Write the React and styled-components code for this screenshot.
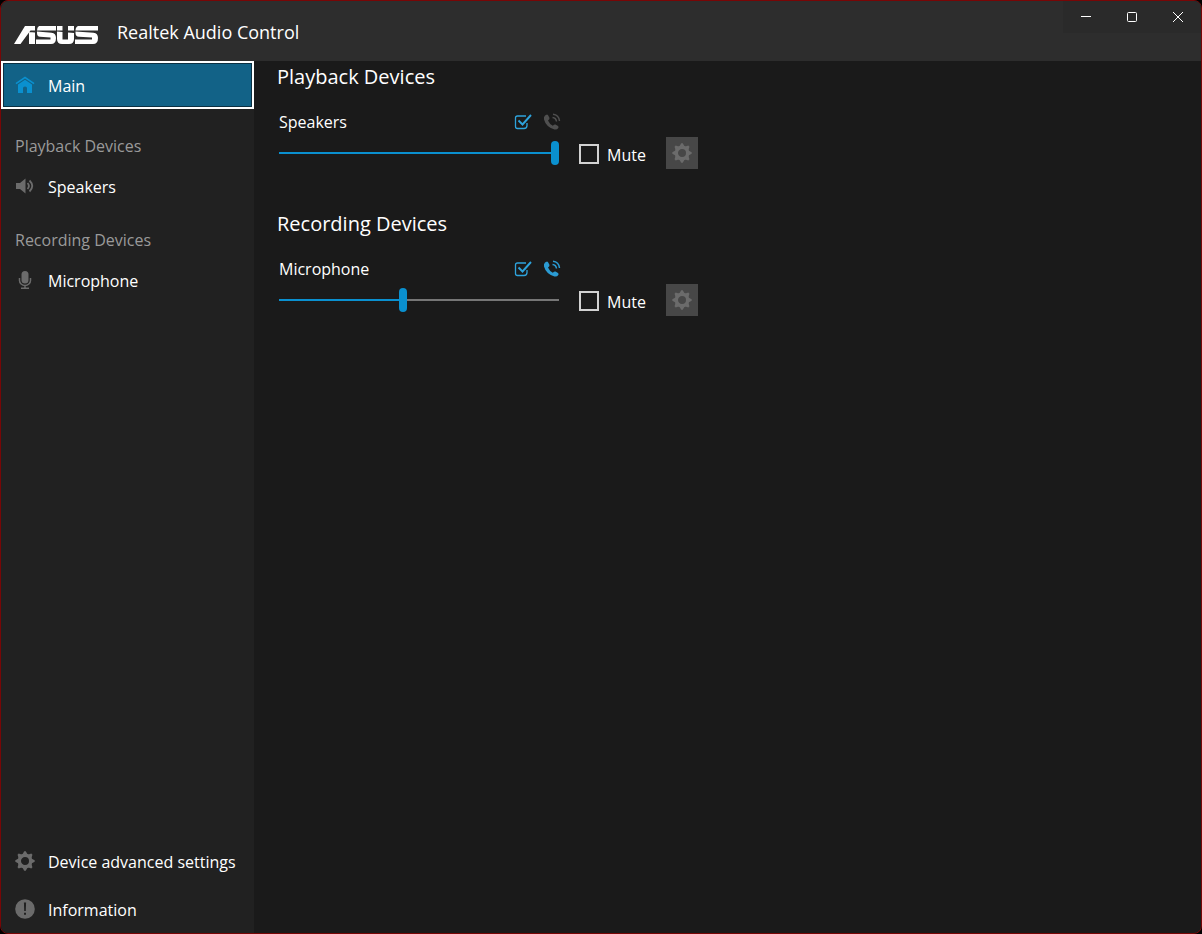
import React, { useState } from 'react';
import styled, { createGlobalStyle } from 'styled-components';

const Blue = '#0a90cf';
const Gray = '#6b6b6b';

const GlobalStyle = createGlobalStyle`
  * {
    box-sizing: border-box;
  }
  body {
    margin: 0;
    background-color: black;
    color: white;
    font-family: 'Open Sans', 'Noto Sans', sans-serif;
    font-size: 16px;
    line-height: 24px;
  }
  button, input {
    font: inherit;
    color: inherit;
  }
`;

const Window = styled.div`
  min-height: 100vh;
  display: flex;
  flex-direction: column;
  border: 1px solid #780606;
  border-radius: 8px;
  overflow: hidden;
  background-color: #1a1a1a;
`;

const Header = styled.header`
  height: 60px;
  display: flex;
  justify-content: space-between;
  background-color: #2d2d2d;
`;

const Brand = styled.div`
  display: flex;
  align-items: center;
  gap: 18px;
  padding: 2px 0 0 12px;
`;

const AppName = styled.h1`
  margin: 0;
  font-size: 18px;
  font-weight: 400;
`;

const WindowControls = styled.div`
  height: 32px;
  display: flex;
  background-color: #2a2a2a;
`;

const WindowButton = styled.button`
  width: 46px;
  padding: 0;
  border: 0;
  display: flex;
  align-items: center;
  justify-content: center;
  background: none;
  &:hover {
    background-color: #3a3a3a;
  }
`;

const Body = styled.div`
  flex: 1;
  display: flex;
`;

const Sidebar = styled.nav`
  width: 253px;
  flex-shrink: 0;
  display: flex;
  flex-direction: column;
  justify-content: space-between;
  background-color: #212121;
`;

const NavGroup = styled.div`
  display: flex;
  flex-direction: column;
`;

const NavTitle = styled.h2`
  margin: 0;
  padding: 18px 14px 4px;
  font-size: 16px;
  font-weight: 400;
  color: #9a9a9a;
`;

const NavButton = styled.button`
  height: 48px;
  margin-bottom: ${({ $active }) => ($active ? '7px' : '0')};
  padding: 0 ${({ $active }) => ($active ? '12px' : '14px')};
  border: ${({ $active }) => ($active ? '2px solid white' : '0')};
  display: flex;
  align-items: center;
  gap: 13px;
  text-align: left;
  background-color: ${({ $active }) => ($active ? '#126287' : 'transparent')};
  box-shadow: ${({ $active }) => ($active ? 'inset 0 0 0 1px #0b3042' : 'none')};
  cursor: pointer;
`;

const LabelText = styled.span`
  padding-top: 2px;
`;

const Content = styled.main`
  flex: 1;
  padding: 3px 23px;
`;

const Section = styled.section`
  height: 147px;
`;

const SectionTitle = styled.h2`
  margin: 0 0 20px;
  font-size: 20px;
  font-weight: 400;
  line-height: 26px;
`;

const Device = styled.div`
  display: grid;
  grid-template-columns: 284px auto auto;
  row-gap: 3px;
  justify-content: start;
  align-items: center;
  padding-left: 2px;
`;

const DeviceHeader = styled.div`
  grid-column: 1 / -1;
  width: 284px;
  display: flex;
  justify-content: space-between;
`;

const DeviceIcons = styled.div`
  display: flex;
  align-items: center;
  gap: 9px;
  padding-right: 1px;
`;

const Slider = styled.input`
  appearance: none;
  width: 280px;
  height: 24px;
  margin: 0;
  background: linear-gradient(
      to right,
      ${Blue} ${({ value }) => value}%,
      #767676 ${({ value }) => value}%
    )
    center / 100% 2px no-repeat;
  &::-webkit-slider-thumb {
    appearance: none;
    width: 8px;
    height: 24px;
    border-radius: 4px;
    background-color: ${Blue};
  }
`;

const MuteLabel = styled.label`
  display: flex;
  align-items: center;
  gap: 8px;
  margin-left: 16px;
  padding-top: 2px;
`;

const MuteBox = styled.input`
  appearance: none;
  width: 20px;
  height: 20px;
  margin: 0;
  border: 2px solid #d2d2d2;
  &:checked {
    background-color: ${Blue};
  }
`;

const SettingsButton = styled.button`
  width: 32px;
  height: 32px;
  margin-left: 20px;
  padding: 0;
  border: 0;
  display: flex;
  align-items: center;
  justify-content: center;
  background-color: #474747;
`;

const AsusLogo = () => (
  <svg width="86" height="26" viewBox="0 -6 86 26" fill="white" role="img" aria-label="ASUS">
    <path d="M1 19 12 1h10v4.500h-4.500L7.500 19zM16 7l6 .6V19h-6z" />
    <path d="M26 1h17v4.500H24Q24 2 26 1zM24 6.500l14.500 1.300q4.500.6 4.500 5.200 0 6-5 6H23v-4.500h14.500v-2L27 11.800q-3-.4-3-3.800z" />
    <path d="M44 1h5.500v4.500H44zM44 6.500l5.500.5v7.500H55V7.400l6 .5V14q0 5-5 5h-7q-5 0-5-5zM55 1h6v4.500h-6z" />
    <path d="M65 1h20v4.500H62.500Q62.500 2 65 1zM62.500 6.500l18 1.300q4.500.6 4.500 5.200 0 6-5 6H62v-4.500h17v-2l-13-.7q-3.500-.4-3.500-3.800z" />
  </svg>
);

const Home = () => (
  <svg width="20" height="20" viewBox="0 0 20 20" fill={Blue}>
    <path d="M10 1.500.5 8l.9 1.200L10 3.600l8.600 5.600.9-1.200z" />
    <path d="M10 4.800 3 9.400V18h5v-5q0-1.500 2-1.500t2 1.500v5h5V9.400z" />
  </svg>
);

const Volume = () => (
  <svg width="20" height="20" viewBox="0 0 20 20" fill={Gray}>
    <path d="M1 7h4l5.500-4.500v15L5 13H1z" />
    <path d="M12.500 7q2.800 3 0 6M14.500 4.500q5.500 5.500 0 11" fill="none" stroke={Gray} strokeWidth="1.800" />
  </svg>
);

const Mic = () => (
  <svg width="20" height="20" viewBox="0 0 20 20" fill={Gray}>
    <rect x="6.500" y="1" width="7" height="12.500" rx="3.500" />
    <path d="M4.500 8v2.500a5.500 5 0 0 0 11 0V8M10 15.500V18M6 18.200h8" fill="none" stroke={Gray} strokeWidth="1.500" />
  </svg>
);

const Gear = () => (
  <svg width="20" height="20" viewBox="0 0 20 20">
    <circle cx="10" cy="10" r="5.700" fill="none" stroke={Gray} strokeWidth="3.400" />
    {[0, 45, 90, 135, 180, 225, 270, 315].map((angle) => (
      <path key={angle} d="M7.400 3.600 9.200.3h1.600l1.800 3.300z" fill={Gray} transform={`rotate(${angle} 10 10)`} />
    ))}
  </svg>
);

const Info = () => (
  <svg width="20" height="20" viewBox="0 0 20 20">
    <circle cx="10" cy="10" r="9.800" fill={Gray} />
    <path d="M8.900 3.500h2.200L10.800 12H9.200zM9 13.800h2v2H9z" fill="#212121" />
  </svg>
);

const DefaultDevice = () => (
  <svg width="20" height="20" viewBox="0 0 20 20" fill="none" stroke="#2ea3dc">
    <path d="M13 4H4.500Q2.500 4 2.500 6v8.500q0 2 2 2H11q3 0 3-3V11" strokeWidth="1.300" />
    <path d="m5.500 8.500 4 4 8.500-9.500" strokeWidth="1.900" />
  </svg>
);

const Phone = ({ color }) => (
  <svg width="20" height="20" viewBox="0 0 20 20">
    <path d="M3 3.500 5 2.500q1 0 1.500 1.500L7.500 6q.3 1-1.500 2.500 1.500 3.500 4.800 5.200Q12.500 12 13.500 12.500l2.500 1.500q1 .8.300 2Q15 18 12.500 17.500 4 15 2 7.500 1.500 5 3 3.500z" fill={color} />
    <path d="M10.500 5.500q3.500.3 4 4M11 2.200q5.800.5 6.500 6.800" fill="none" stroke={color} strokeWidth="1.500" />
  </svg>
);

const DeviceControl = ({ title, name, initialVolume, phoneColor }) => {
  const [volume, setVolume] = useState(initialVolume);

  return (
    <Section>
      <SectionTitle>{title}</SectionTitle>
      <Device>
        <DeviceHeader>
          <label htmlFor={name}>{name}</label>
          <DeviceIcons>
            <DefaultDevice />
            <Phone color={phoneColor} />
          </DeviceIcons>
        </DeviceHeader>
        <Slider
          id={name}
          type="range"
          min="0"
          max="100"
          value={volume}
          onChange={(e) => setVolume(Number(e.target.value))}
        />
        <MuteLabel>
          <MuteBox type="checkbox" />
          <LabelText>Mute</LabelText>
        </MuteLabel>
        <SettingsButton aria-label={`${name} settings`}>
          <Gear />
        </SettingsButton>
      </Device>
    </Section>
  );
};

const NavItem = ({ icon, active, children }) => (
  <NavButton $active={active}>
    {icon}
    <LabelText>{children}</LabelText>
  </NavButton>
);

const App = () => (
  <>
    <GlobalStyle />
    <Window>
      <Header>
        <Brand>
          <AsusLogo />
          <AppName>Realtek Audio Control</AppName>
        </Brand>
        <WindowControls>
          <WindowButton aria-label="Minimize">
            <svg width="12" height="12" viewBox="0 0 12 12" stroke="white">
              <path d="M1 5.500h10" />
            </svg>
          </WindowButton>
          <WindowButton aria-label="Maximize">
            <svg width="12" height="12" viewBox="0 0 12 12" stroke="white" fill="none">
              <rect x="1.500" y="1.500" width="9" height="9" rx="1" />
            </svg>
          </WindowButton>
          <WindowButton aria-label="Close">
            <svg width="12" height="12" viewBox="0 0 12 12" stroke="white">
              <path d="m1 1 10 10M11 1 1 11" />
            </svg>
          </WindowButton>
        </WindowControls>
      </Header>
      <Body>
        <Sidebar>
          <NavGroup>
            <NavItem icon={<Home />} active>Main</NavItem>
            <NavTitle>Playback Devices</NavTitle>
            <NavItem icon={<Volume />}>Speakers</NavItem>
            <NavTitle>Recording Devices</NavTitle>
            <NavItem icon={<Mic />}>Microphone</NavItem>
          </NavGroup>
          <NavGroup>
            <NavItem icon={<Gear />}>Device advanced settings</NavItem>
            <NavItem icon={<Info />}>Information</NavItem>
          </NavGroup>
        </Sidebar>
        <Content>
          <DeviceControl title="Playback Devices" name="Speakers" initialVolume={100} phoneColor="#4f4f4f" />
          <DeviceControl title="Recording Devices" name="Microphone" initialVolume={44} phoneColor="#2b9bd3" />
        </Content>
      </Body>
    </Window>
  </>
);

export default App;
